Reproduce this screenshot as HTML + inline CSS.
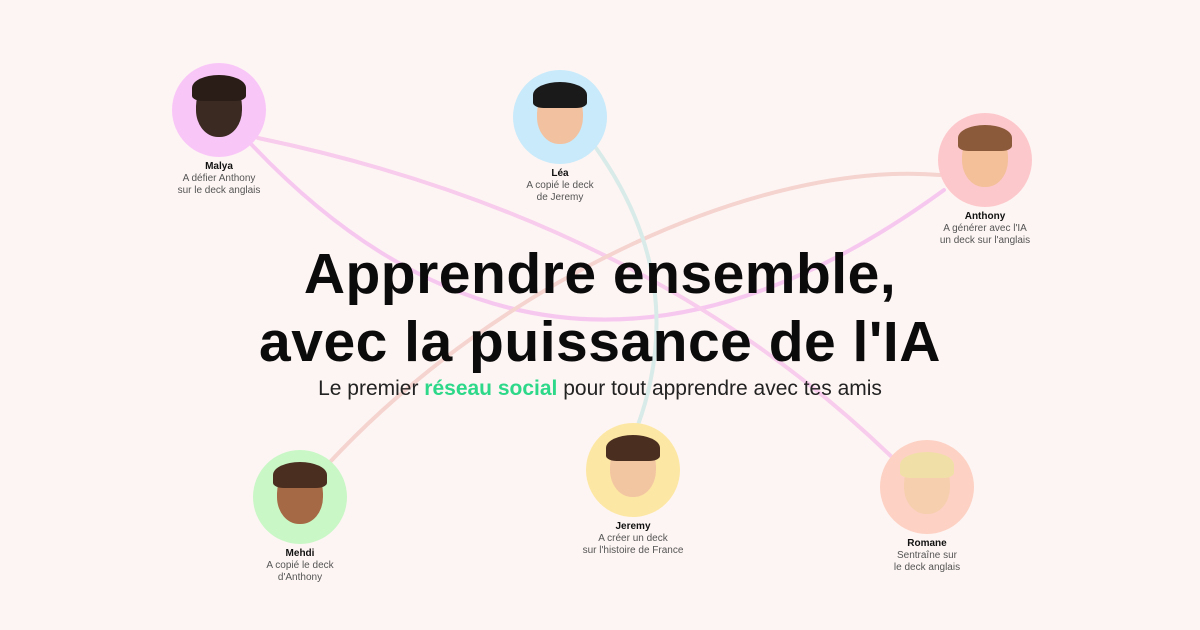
<!DOCTYPE html><html><head><meta charset="utf-8"><style>
body{margin:0;width:1200px;height:630px;background:#fdf5f3;overflow:hidden;position:relative;font-family:"Liberation Sans",sans-serif}
.n{position:absolute;width:160px;text-align:center;font-size:10px;color:#555;line-height:12px}
.c{width:94px;height:94px;border-radius:50%;margin:0 auto 4px;position:relative;overflow:hidden}
.f{position:absolute;left:24px;top:18px;width:46px;height:56px;border-radius:45% 45% 48% 48%}
.h{position:absolute;left:20px;top:12px;width:54px;height:26px;border-radius:50% 50% 20% 20%}
.n b{color:#111;display:block}
h1{position:absolute;top:240px;left:0;width:1200px;margin:0;text-align:center;font-size:57px;line-height:68px;font-weight:700;color:#0b0b0b;letter-spacing:0.5px}
p{position:absolute;top:377px;left:0;width:1200px;margin:0;text-align:center;font-size:21px;color:#222}
p span{color:#2ed889;font-weight:700}
</style></head><body>
<svg width="1200" height="630" style="position:absolute;left:0;top:0" fill="none" stroke-width="4" stroke-linecap="round">
<path d="M252 145 Q560 470 944 190" stroke="#f7c8ef"/>
<path d="M258 138 Q656 221 905 470" stroke="#f8ccec"/>
<path d="M940 175 C760 160 500 280 330 462" stroke="#f5d3cf"/>
<path d="M596 148 Q690 280 638 425" stroke="#d9ebe8"/>
</svg>
<div class="n" style="left:139px;top:63px"><div class="c" style="background:#f9c6f8"><div class="f" style="background:#3a2a22"></div><div class="h" style="background:#2a1d17"></div></div><b>Malya</b>A défier Anthony<br>sur le deck anglais</div>
<div class="n" style="left:480px;top:70px"><div class="c" style="background:#c8eafb"><div class="f" style="background:#f2c2a0"></div><div class="h" style="background:#1a1a1a"></div></div><b>Léa</b>A copié le deck<br>de Jeremy</div>
<div class="n" style="left:905px;top:113px"><div class="c" style="background:#fdc8cc"><div class="f" style="background:#f3c09a"></div><div class="h" style="background:#8a5a3a"></div></div><b>Anthony</b>A générer avec l'IA<br>un deck sur l'anglais</div>
<div class="n" style="left:220px;top:450px"><div class="c" style="background:#c9f7c6"><div class="f" style="background:#a56a45"></div><div class="h" style="background:#4a2e20"></div></div><b>Mehdi</b>A copié le deck<br>d'Anthony</div>
<div class="n" style="left:553px;top:423px"><div class="c" style="background:#fde7a4"><div class="f" style="background:#f3c6a2"></div><div class="h" style="background:#4a2e1f"></div></div><b>Jeremy</b>A créer un deck<br>sur l'histoire de France</div>
<div class="n" style="left:847px;top:440px"><div class="c" style="background:#fdd1c4"><div class="f" style="background:#f6cfae"></div><div class="h" style="background:#f1dfa8"></div></div><b>Romane</b>Sentraîne sur<br>le deck anglais</div>
<h1>Apprendre ensemble,<br>avec la puissance de l'IA</h1>
<p>Le premier <span>réseau social</span> pour tout apprendre avec tes amis</p>
</body></html>
